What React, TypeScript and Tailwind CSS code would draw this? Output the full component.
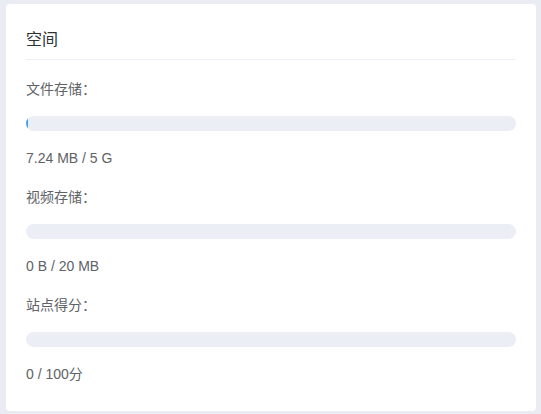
import React from "react";

const ITEMS = [
  { label: "文件存储：", text: "7.24 MB / 5 G", fill: "w-[2px]" },
  { label: "视频存储：", text: "0 B / 20 MB", fill: "w-0" },
  { label: "站点得分：", text: "0 / 100分", fill: "w-0" },
];

export default function App() {
  return (
    <div
      className="w-[541px] h-[414px] bg-[#e9ecf2] pt-[4px] pl-[6px]"
      style={{ fontFamily: '"Liberation Sans", "Noto Sans CJK SC", sans-serif' }}
    >
      <div className="w-[530px] h-[407px] bg-white rounded-[4px] px-[20px] pt-[24px]">
        <div className="text-[16px] leading-[24px] text-[#303133] pb-[7px] border-b border-[#ebeef5]">
          空间
        </div>

        <div className="mt-[19px] flex flex-col gap-[19px]">
          {ITEMS.map((it) => (
            <div key={it.label} className="flex flex-col">
              <div className="text-[14px] leading-[20px] text-[#606266]">{it.label}</div>
              <div className="mt-[17px] h-[15px] rounded-full bg-[#ebeef5] overflow-hidden">
                <div className={`h-full bg-[#409eff] ${it.fill}`} />
              </div>
              <div className="mt-[17px] text-[14px] leading-[20px] text-[#606266]">{it.text}</div>
            </div>
          ))}
        </div>
      </div>
    </div>
  );
}
